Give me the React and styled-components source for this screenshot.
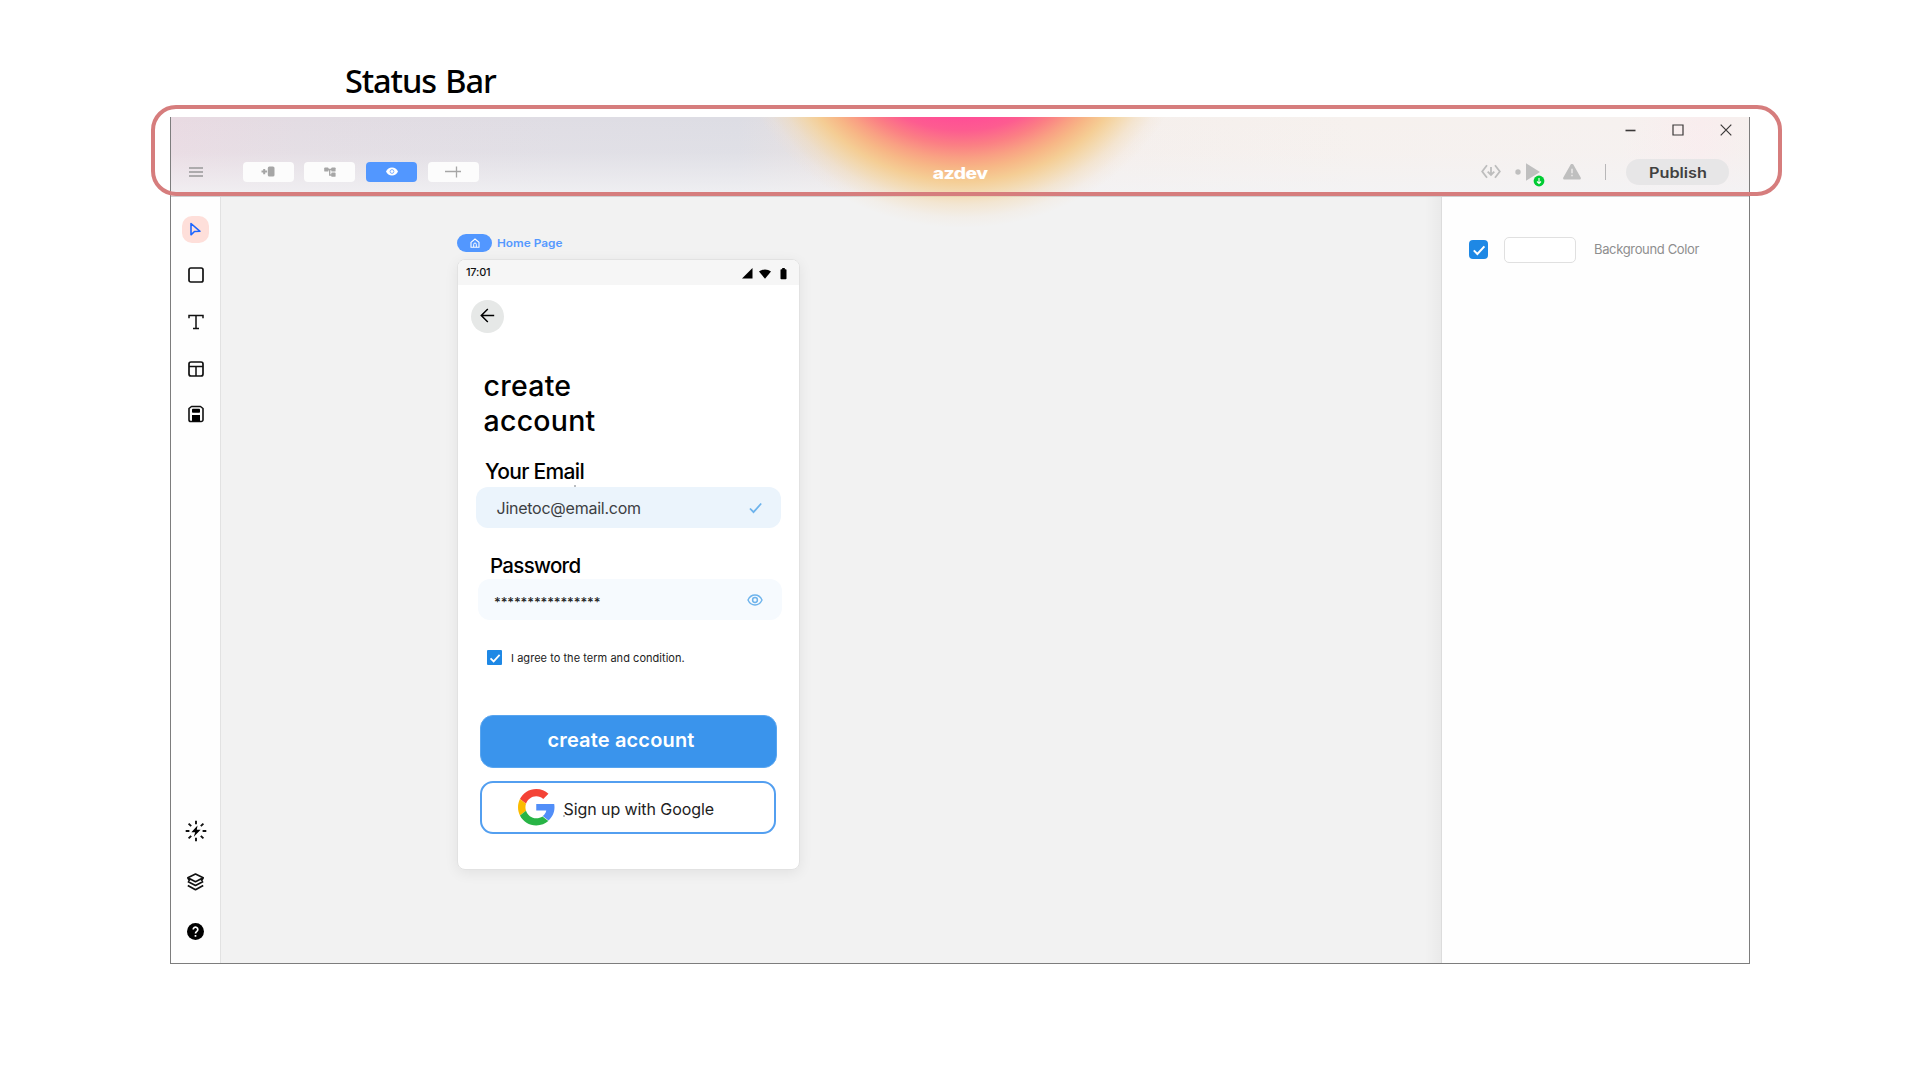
import React from "react";
import styled, { createGlobalStyle } from "styled-components";

const Global = createGlobalStyle`
  * { box-sizing: border-box; }
  body { margin: 0; background: #fff; overflow: hidden; }
  svg { display: block; flex: none; }
`;

const Page = styled.div`
  position: relative;
  width: 1920px;
  height: 1080px;
  padding: 56px 170px 0;
  font-family: Inter, "Liberation Sans", sans-serif;
  color: #0b0b0b;
`;

const Caption = styled.h1`
  margin: 0 0 11px;
  padding-left: 175px;
  height: 50px;
  font: 500 32.5px/50px "Noto Sans", "Open Sans", sans-serif;
  letter-spacing: -1.1px;
  word-spacing: 2px;
  white-space: nowrap;
  color: #000;
`;

const Highlight = styled.div`
  position: absolute;
  z-index: 5;
  left: 151px;
  top: 105px;
  width: 1631px;
  height: 91px;
  border: 4px solid #d67d7d;
  border-radius: 25px;
`;

const Text = styled.span`
  display: block;
  white-space: nowrap;
  font-size: ${(p) => p.$size}px;
  font-weight: ${(p) => p.$weight || 400};
  line-height: ${(p) => p.$line || 20}px;
  letter-spacing: ${(p) => p.$spacing || 0}px;
  color: ${(p) => p.$color || "#0b0b0b"};
  margin-left: ${(p) => p.$left || 0}px;
  margin-top: ${(p) => p.$top || 0}px;
  transform: scaleX(${(p) => p.$stretch || 1});
  transform-origin: ${(p) => p.$origin || "left"} center;
`;

const Window = styled.div`
  position: relative;
  width: 1580px;
  height: 847px;
  border: 1px solid #7d7d7d;
  border-top: 0;
  display: flex;
  flex-direction: column;
`;

const Header = styled.header`
  height: 80px;
  flex: none;
  border-bottom: 1px solid #cfcfd1;
  display: flex;
  flex-direction: column;
  background:
    linear-gradient(180deg, rgba(243, 243, 245, 0) 0%, rgba(243, 243, 245, 0.12) 45%, rgba(243, 243, 245, 0.85) 100%),
    linear-gradient(90deg, #e9dae2 0%, #e3dce3 8%, #dfdde4 25%, #dddde4 36%, #e6dfe0 42%, #f5efec 60%, #f6f1ee 75%, #f6f1ef 92%, #f9edee 97%, #f6f0ee 100%);
`;

const Glow = styled.div`
  position: absolute;
  left: 570px;
  top: 0;
  width: 440px;
  height: 110px;
  pointer-events: none;
  background: radial-gradient(
    232px 212px at 221px -101px,
    #ff4f96 0 48%,
    #fd5c90 54%,
    #fb7f84 61%,
    #f9a083 67%,
    #f7b786 72%,
    rgba(245, 204, 145, 0.96) 78%,
    rgba(244, 212, 160, 0.8) 83%,
    rgba(243, 218, 180, 0.5) 89%,
    rgba(243, 225, 203, 0.22) 95%,
    rgba(243, 232, 220, 0) 100%
  );
`;

const WindowControls = styled.div`
  height: 26px;
  padding: 0 17px 0 0;
  display: flex;
  align-items: center;
  justify-content: flex-end;
  gap: 36px;
  position: relative;
  z-index: 1;
`;

const Toolbar = styled.div`
  position: relative;
  z-index: 1;
  height: 53px;
  padding: 8px 20px 2px 18px;
  margin-top: -1px;
  display: grid;
  grid-template-columns: 1fr auto 1fr;
  align-items: center;
`;

const ToolGroup = styled.div`
  display: flex;
  align-items: center;
  gap: 10.7px;
`;

const Burger = styled.div`
  width: 14px;
  height: 10px;
  margin-right: 29px;
  border-top: 2px solid #adabad;
  border-bottom: 2px solid #adabad;
  display: flex;
  align-items: center;
  &::after { content: ""; width: 14px; height: 2px; background: #adabad; }
`;

const ToolButton = styled.button`
  width: 51px;
  height: 20px;
  padding: 0;
  border: 0;
  border-radius: 4px;
  background: ${(p) => (p.$active ? "#5297ff" : "#fcfcfc")};
  display: grid;
  place-items: center;
`;

const Actions = styled.div`
  display: flex;
  align-items: center;
  justify-content: flex-end;
`;

const Run = styled.div`
  position: relative;
  display: flex;
  margin: 0 22px 0 14px;
`;

const Badge = styled.div`
  position: absolute;
  left: 18px;
  top: 12px;
`;

const Divider = styled.div`
  width: 1px;
  height: 16px;
  background: #b8b7b8;
  margin: 0 20px 0 24px;
`;

const Publish = styled.button`
  width: 103px;
  height: 26px;
  padding: 0;
  border: 0;
  border-radius: 13px;
  background: #e7e6e7;
  font-family: inherit;
  display: grid;
  place-items: center;
`;

const Body = styled.div`
  flex: 1;
  display: flex;
  min-height: 0;
`;

const Sidebar = styled.nav`
  width: 50px;
  padding: 18.500px 0 18.500px 0;
  background: #fefefe;
  border-right: 1px solid #e2e2e2;
  display: flex;
  flex-direction: column;
  justify-content: space-between;
  align-items: center;
`;

const SideGroup = styled.div`
  display: grid;
  justify-items: center;
  gap: ${(p) => p.$gap}px;
`;

const SideItem = styled.div`
  width: 27px;
  height: 27px;
  margin-top: ${(p) => p.$top || 0}px;
  border-radius: 10px;
  background: ${(p) => (p.$active ? "#fedfda" : "transparent")};
  display: grid;
  place-items: center;
`;

const Canvas = styled.main`
  flex: 1;
  padding: 37px 0 0 236px;
  background: linear-gradient(90deg, rgba(0, 0, 0, 0) calc(100% - 16px), rgba(0, 0, 0, 0.035) 100%), #f2f2f2;
`;

const PageTag = styled.div`
  height: 18px;
  display: flex;
  align-items: center;
  gap: 5px;
  margin-bottom: 7px;
`;

const TagPill = styled.div`
  width: 35px;
  height: 18px;
  border-radius: 9px;
  background: #5297ff;
  display: grid;
  place-items: center;
`;

const Phone = styled.section`
  position: relative;
  width: 343px;
  height: 611px;
  border: 1px solid #e2e2e2;
  border-radius: 8px;
  background: #fff;
  overflow: hidden;
  display: flex;
  flex-direction: column;
  align-items: flex-start;
`;

const PhoneShadow = styled.div`
  width: 343px;
  border-radius: 8px;
  box-shadow: 0 3px 14px rgba(0, 0, 0, 0.07);
`;

const PhoneStatus = styled.div`
  width: 100%;
  height: 25px;
  padding: 0 11px 0 8px;
  background: #f6f6f6;
  display: flex;
  align-items: center;
  justify-content: space-between;
`;

const StatusIcons = styled.div`
  display: flex;
  align-items: center;
  gap: 6px;
  padding-top: 2px;
`;

const Back = styled.div`
  width: 33px;
  height: 33px;
  margin: 15px 0 35px 13px;
  border-radius: 50%;
  background: #e6e8e7;
  display: grid;
  place-items: center;
  padding: 0 1px 2px 0;
`;

const Field = styled.div`
  width: ${(p) => p.$width}px;
  height: 41px;
  margin: ${(p) => p.$top}px 0 0 ${(p) => p.$left}px;
  padding: 0 ${(p) => p.$end}px 0 ${(p) => p.$pad}px;
  border-radius: 12px;
  background: ${(p) => p.$bg};
  display: flex;
  align-items: center;
  justify-content: space-between;
`;

const Agree = styled.div`
  height: 15px;
  margin: 30px 0 0 29px;
  display: flex;
  align-items: center;
  gap: 9px;
`;

const Check = styled.div`
  width: ${(p) => p.$size}px;
  height: ${(p) => p.$size}px;
  border-radius: ${(p) => p.$radius}px;
  background: #1e88e5;
  display: grid;
  place-items: center;
`;

const Action = styled.button`
  width: ${(p) => (p.$outline ? 296 : 297)}px;
  height: 53px;
  margin: ${(p) => p.$top}px 0 0 22px;
  padding: 0 0 0 ${(p) => p.$pad}px;
  border: ${(p) => (p.$outline ? "2px solid #539ff0" : "1px solid #58a5f0")};
  border-radius: 13px;
  background: ${(p) => (p.$outline ? "#fff" : "#3a94ec")};
  font-family: inherit;
  display: flex;
  align-items: center;
`;

const Speck = styled.i`
  position: absolute;
  left: ${(p) => p.$x}px;
  top: ${(p) => p.$y}px;
  width: 2px;
  height: 2px;
  background: #b9bcc0;
`;

const Inspector = styled.aside`
  width: 308px;
  padding: 39.500px 0 0 27px;
  background: #fefefe;
  border-left: 1px solid #dcdcdc;
`;

const Property = styled.div`
  height: 26px;
  display: flex;
  align-items: center;
`;

const Swatch = styled.div`
  width: 72px;
  height: 26px;
  margin: 0 18px 0 16px;
  border: 1px solid #e0e0e0;
  border-radius: 5px;
  background: #fff;
`;

const CheckMark = ({ size }) => (
  <svg width={size} height={size} viewBox="0 0 14 14" fill="none">
    <path d="M1.8 7.4 5.4 11 12.4 3.4" stroke="#fff" strokeWidth="2" />
  </svg>
);

const GoogleLogo = () => (
  <svg width="36.500" height="36.500" viewBox="0 0 48 48">
    <path fill="#f44336" d="M24 9.5c3.54 0 6.71 1.22 9.21 3.6l6.85-6.85C35.9 2.38 30.47 0 24 0 14.62 0 6.51 5.38 2.56 13.22l7.98 6.19C12.43 13.72 17.74 9.5 24 9.5z" />
    <path fill="#518ef8" d="M47.6 19.6H24v8.8h13.2c-.6 3-2.2 5.5-4.7 7.2l7.6 5.9c4.8-4.4 7.9-10.4 7.9-17.5 0-1.5-.1-3-.4-4.4z" />
    <path fill="#fbbb00" d="M10.53 28.59c-.48-1.45-.76-2.99-.76-4.59s.27-3.14.76-4.59l-7.98-6.19C.92 16.46 0 20.12 0 24c0 3.88.92 7.54 2.56 10.78l7.97-6.19z" />
    <path fill="#28b446" d="M24 48c6.48 0 11.93-2.13 15.89-5.81l-7.73-6c-2.15 1.45-4.92 2.3-8.16 2.3-6.26 0-11.57-4.22-13.47-9.91l-7.98 6.19C6.51 42.62 14.62 48 24 48z" />
  </svg>
);

export default function App() {
  return (
    <Page>
      <Global />
      <Caption>Status Bar</Caption>
      <Highlight />
      <Window>
        <Glow />
        <Header>
          <WindowControls>
            <svg width="12" height="12" viewBox="0 0 12 12"><path d="M1.500 6.500h10" stroke="#3b3838" strokeWidth="1.600" /></svg>
            <svg width="12" height="12" viewBox="0 0 12 12" fill="none"><path d="M1 1h10v10H1z" stroke="#3b3838" strokeWidth="1.200" /></svg>
            <svg width="12" height="12" viewBox="0 0 12 12"><path d="m.7.7 10.600 10.600M11.300.7.7 11.300" stroke="#3b3838" strokeWidth="1.200" /></svg>
          </WindowControls>
          <Toolbar>
            <ToolGroup>
              <Burger />
              <ToolButton>
                <svg width="14" height="11" viewBox="0 0 14 11"><path d="M3.200 3v5.200M.5 5.600h5.600" stroke="#a6a6a6" strokeWidth="2" /><rect x="6.800" y=".5" width="6.700" height="10" rx="1.600" fill="#a6a6a6" /></svg>
              </ToolButton>
              <ToolButton>
                <svg width="12" height="10" viewBox="0 0 12 10"><path d="M3 2.500h5M5.700 2.500v5.500H8" stroke="#a6a6a6" fill="none" strokeWidth="1.300" /><g fill="#a6a6a6"><rect x=".2" y=".4" width="4.300" height="4.200" rx=".9" /><rect x="7.300" y=".4" width="4.300" height="4.200" rx=".9" /><rect x="7.300" y="5.600" width="4.300" height="4.200" rx=".9" /></g></svg>
              </ToolButton>
              <ToolButton $active>
                <svg width="12" height="9" viewBox="0 0 12 9"><path d="M0 4.500C1.200 1.800 3.400.4 6 .4s4.800 1.400 6 4.100C10.800 7.200 8.600 8.600 6 8.600S1.200 7.200 0 4.500z" fill="#fff" /><circle cx="6" cy="4.500" r="1.900" fill="none" stroke="#7db0ff" strokeWidth="1" /></svg>
              </ToolButton>
              <ToolButton>
                <svg width="16" height="12" viewBox="0 0 16 12"><path d="M0 5.500h16M11.500.5v11" stroke="#a6a6a6" strokeWidth="1.300" /></svg>
              </ToolButton>
            </ToolGroup>
            <Text $size={15.5} $weight={800} $color="#fff" $stretch={1.24} $origin="center" $top={4} $left={2} $spacing={-0.4}>azdev</Text>
            <Actions>
              <svg width="20" height="15" viewBox="0 0 20 15" fill="none" stroke="#bdbdbd" strokeWidth="1.800"><path d="M6 1.200 1.200 7.500 6 13.800M14 1.200l4.800 6.300-4.800 6.300M10 3v7.500M6.700 7.700 10 11l3.300-3.300" /></svg>
              <Run>
                <svg width="26" height="18" viewBox="0 0 26 18" fill="#bfbfbf"><circle cx="3" cy="9" r="2.700" /><path d="M11 .3 25 9 11 17.700z" /></svg>
                <Badge>
                  <svg width="12" height="12" viewBox="0 0 12 12"><circle cx="6" cy="6" r="5.400" fill="#0c3" /><path d="M6 3v5.500M4 6.500l2 2 2-2" fill="none" stroke="#fff" strokeWidth="1.100" /></svg>
                </Badge>
              </Run>
              <svg width="18" height="16" viewBox="0 0 18 16"><path d="M7.400.9a1.800 1.800 0 0 1 3.200 0l7.100 12.500c.5 1-.1 2.100-1.200 2.100h-15C.4 15.500-.2 14.400.3 13.400z" fill="#bfbfbf" /><path d="M9 4.700v4.600M9 10.800v1.500" stroke="#f1eeee" strokeWidth="1.300" /></svg>
              <Divider />
              <Publish>
                <Text $size={14} $weight={600} $color="#404040" $stretch={1.16} $origin="center" $top={3}>Publish</Text>
              </Publish>
            </Actions>
          </Toolbar>
        </Header>
        <Body>
          <Sidebar>
            <SideGroup $gap={18.5}>
              <SideItem $active>
                <svg width="13" height="15" viewBox="0 0 13 15" fill="none"><path d="M2 1.500v11.300l3.500-3.300 5.500-.2z" stroke="#1d66ff" strokeWidth="1.600" strokeLinejoin="round" /></svg>
              </SideItem>
              <SideItem>
                <svg width="16" height="16" viewBox="0 0 16 16" fill="none"><rect x="1" y="1" width="14" height="14" rx="1.800" stroke="#111" strokeWidth="1.700" /></svg>
              </SideItem>
              <SideItem $top={2}>
                <svg width="16" height="16" viewBox="0 0 16 16" fill="none"><path d="M1 4.200V1.500h14v2.700M8 1.500v13M5 14.500h6" stroke="#111" strokeWidth="1.500" /></svg>
              </SideItem>
              <SideItem $top={1.5}>
                <svg width="16" height="16" viewBox="0 0 16 16" fill="none"><rect x="1" y="1" width="14" height="14" rx="2" stroke="#111" strokeWidth="1.700" /><path d="M1 5.500h14M8 5.500V15" stroke="#111" strokeWidth="1.500" /></svg>
              </SideItem>
              <SideItem $top={-0.5}>
                <svg width="16" height="18" viewBox="0 0 16 18" fill="none"><path d="M3.500 1.500h9L15 3.500v11.200a1.800 1.800 0 0 1-1.800 1.800H2.800A1.800 1.800 0 0 1 1 14.700V3.500z" stroke="#111" strokeWidth="1.600" strokeLinejoin="round" /><rect x="4" y="3.800" width="8" height="4" rx=".8" fill="#000" /><rect x="4" y="10" width="8" height="6.500" fill="#000" /></svg>
              </SideItem>
            </SideGroup>
            <SideGroup $gap={22}>
              <SideItem>
                <svg width="22" height="22" viewBox="0 0 22 22"><path d="M11 .7v3.500M11 17.800v3.500M.7 11h3.700M17.600 11h3.700M3.600 3.600l2.600 2.600M18.400 3.600l-2.600 2.600M3.600 18.400l2.600-2.600M18.400 18.400l-2.600-2.600" stroke="#111" strokeWidth="1.900" /><path d="M12.500 5.500 6.400 12.300h3.800l-1.400 4.400 6.800-6.900h-3.800z" fill="#000" /></svg>
              </SideItem>
              <SideItem $top={2}>
                <svg width="19" height="18" viewBox="0 0 19 18" fill="none" stroke="#111" strokeWidth="1.700" strokeLinejoin="round"><path d="m9.500 1 7.700 3.800-7.700 3.900-7.700-3.900zM1.800 8.400l7.700 4 7.700-4M1.800 12.400l7.700 4.300 7.700-4.300M1.800 4.800 3.600 8M17.200 4.800 15.400 8" /></svg>
              </SideItem>
              <SideItem>
                <svg width="17" height="17" viewBox="0 0 17 17"><circle cx="8.500" cy="8.500" r="8.500" fill="#000" /><path d="M6.200 6.500a2.300 2.300 0 1 1 3.600 1.900c-.9.6-1.300 1-1.300 2.100M8.500 12v1.700" fill="none" stroke="#fff" strokeWidth="1.700" /></svg>
              </SideItem>
            </SideGroup>
          </Sidebar>
          <Canvas>
            <PageTag>
              <TagPill>
                <svg width="10" height="10" viewBox="0 0 10 10" fill="none" stroke="#fff"><path d="M1 4.300 5 1l4 3.300V9.300H1z" strokeWidth="1.100" /><path d="M3.700 9V6.300a1.300 1.300 0 0 1 2.600 0V9" strokeWidth="1" /></svg>
              </TagPill>
              <Text $size={10.5} $weight={600} $color="#5599ff" $stretch={1.13} $top={2}>Home Page</Text>
            </PageTag>
            <PhoneShadow>
              <Phone>
                <PhoneStatus>
                  <Text $size={11} $weight={500} $color="#111" $top={-2} $spacing={-0.2}>17:01</Text>
                  <StatusIcons>
                    <svg width="11" height="11" viewBox="0 0 11 11"><path d="M0 10.500 10.500 0v10.500z" /></svg>
                    <svg width="12" height="10" viewBox="0 0 12 10"><path d="M0 2.600C3.500-.3 8.500-.3 12 2.600L6 9.700z" /></svg>
                    <svg width="11" height="12" viewBox="0 0 11 12"><path d="M5.200 0h2.600v1.200h.9q.8 0 .8.800v8.500q0 .8-.8.800H4.300q-.8 0-.8-.8V2q0-.8.8-.8h.9z" /></svg>
                  </StatusIcons>
                </PhoneStatus>
                <Back>
                  <svg width="15" height="15" viewBox="0 0 15 15" fill="none" stroke="#000" strokeWidth="1.500"><path d="M14.200 7.500H1.200M7.800 1 1.300 7.500 7.800 14" /></svg>
                </Back>
                <Text as="div" $size={28.5} $weight={500} $line={35} $left={25.5} $spacing={0.25} $color="#000">create<br />account</Text>
                <Text $size={21} $weight={500} $line={24} $left={27} $top={22} $spacing={-0.65} $color="#000">Your Email</Text>
                <Field $width={305} $top={3} $left={18} $pad={20.5} $end={19} $bg="#ebf4fc">
                  <Text $size={16} $color="#3c4043" $spacing={-0.25}>Jinetoc@email.com</Text>
                  <svg width="13" height="12" viewBox="0 0 13 12" fill="none"><path d="m1 6.500 3.500 3.700L12.200 1.500" stroke="#6db3ec" strokeWidth="1.800" /></svg>
                </Field>
                <Text $size={20.5} $weight={500} $line={24} $left={32} $top={26} $spacing={-0.7} $color="#000">Password</Text>
                <Field $width={304} $top={1} $left={20} $pad={16} $end={19.5} $bg="#f6fafe">
                  <Text $size={13} $weight={500} $top={5} $spacing={-0.12} $color="#222">****************</Text>
                  <svg width="16" height="12" viewBox="0 0 16 12" fill="none" stroke="#6db3ec"><path d="M1 6C2.500 2.700 5 1 8 1s5.500 1.700 7 5c-1.500 3.300-4 5-7 5S2.500 9.300 1 6z" strokeWidth="1.400" /><circle cx="8" cy="6" r="2.400" strokeWidth="1.500" /></svg>
                </Field>
                <Agree>
                  <Check $size={15} $radius={1}><CheckMark size={12} /></Check>
                  <Text $size={11} $color="#222" $line={15} $top={2} $spacing={0.04}>I agree to the term and condition.</Text>
                </Agree>
                <Action $top={50} $pad={66.5}>
                  <Text $size={20} $weight={600} $color="#fff" $top={-4} $spacing={0.15}>create account</Text>
                </Action>
                <Action $outline $top={13} $pad={36}>
                  <GoogleLogo />
                  <Text $size={16} $left={9} $top={2} $spacing={-0.08} $color="#222">Sign up with Google</Text>
                </Action>
                <Speck $x={116} $y={225} />
                <Speck $x={105} $y={555} />
              </Phone>
            </PhoneShadow>
          </Canvas>
          <Inspector>
            <Property>
              <Check $size={19} $radius={4}><CheckMark size={14} /></Check>
              <Swatch />
              <Text $size={13} $color="#8e8e8e" $spacing={-0.35} $top={-1}>Background Color</Text>
            </Property>
          </Inspector>
        </Body>
      </Window>
    </Page>
  );
}
